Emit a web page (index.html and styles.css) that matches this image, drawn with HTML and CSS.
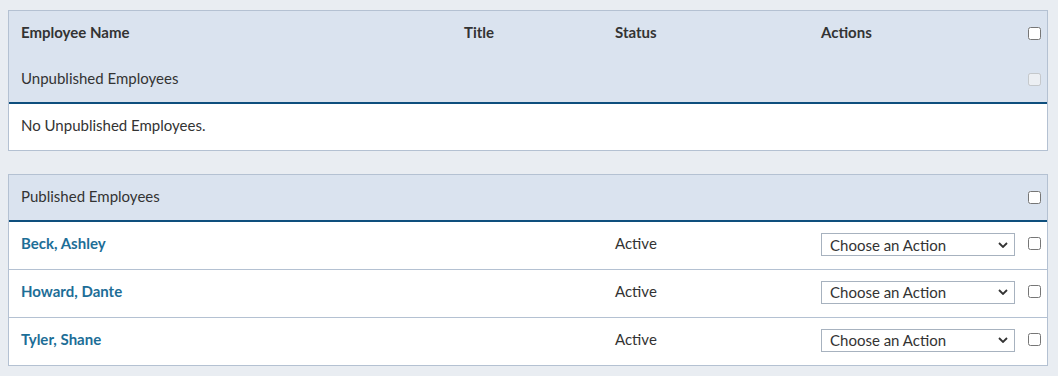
FILE: index.html
```html
<!DOCTYPE html>
<html>
<head>
    <title>Employees</title>
    <link rel="stylesheet" href="styles.css">
</head>
<body>
    <!-- Unpublished -->
    <div class="panel">
        <table class="emp-table">
            <colgroup>
                <col class="col-name">
                <col class="col-title">
                <col class="col-status">
                <col class="col-actions">
                <col class="col-check">
            </colgroup>
            <thead>
                <tr class="head-row">
                    <th>Employee Name</th>
                    <th>Title</th>
                    <th>Status</th>
                    <th>Actions</th>
                    <th class="check-cell"><input type="checkbox"></th>
                </tr>
                <tr class="group-row">
                    <td colspan="4">Unpublished Employees</td>
                    <td class="check-cell"><input type="checkbox" disabled></td>
                </tr>
            </thead>
            <tbody>
                <tr class="empty-row">
                    <td colspan="5">No Unpublished Employees.</td>
                </tr>
            </tbody>
        </table>
    </div>

    <!-- Published -->
    <div class="panel">
        <table class="emp-table">
            <colgroup>
                <col class="col-name">
                <col class="col-title">
                <col class="col-status">
                <col class="col-actions">
                <col class="col-check">
            </colgroup>
            <thead>
                <tr class="group-row">
                    <td colspan="4">Published Employees</td>
                    <td class="check-cell"><input type="checkbox"></td>
                </tr>
            </thead>
            <tbody>
                <tr class="emp-row">
                    <td><a href="#">Beck, Ashley</a></td>
                    <td></td>
                    <td>Active</td>
                    <td>
                        <select class="action-select">
                            <option>Choose an Action</option>
                        </select>
                    </td>
                    <td class="check-cell"><input type="checkbox"></td>
                </tr>
                <tr class="emp-row">
                    <td><a href="#">Howard, Dante</a></td>
                    <td></td>
                    <td>Active</td>
                    <td>
                        <select class="action-select">
                            <option>Choose an Action</option>
                        </select>
                    </td>
                    <td class="check-cell"><input type="checkbox"></td>
                </tr>
                <tr class="emp-row">
                    <td><a href="#">Tyler, Shane</a></td>
                    <td></td>
                    <td>Active</td>
                    <td>
                        <select class="action-select">
                            <option>Choose an Action</option>
                        </select>
                    </td>
                    <td class="check-cell"><input type="checkbox"></td>
                </tr>
            </tbody>
        </table>
    </div>
</body>
</html>
```

FILE: styles.css
```css
body {
    margin: 0;
    padding: 10px 10px 0 8px;
    background: #e9edf2;
    font-family: Lato, "Noto Sans", sans-serif;
    font-size: 15px;
    color: #333;
}

.panel {
    background: #fff;
    border: 1px solid #b4c1d2;
    margin-bottom: 23px;
}

.emp-table {
    width: 100%;
    border-collapse: collapse;
    table-layout: fixed;
}

.col-name { width: 443px; }
.col-title { width: 151px; }
.col-status { width: 206px; }
.col-actions { width: 207px; }
.col-check { width: 31px; }

.emp-table th,
.emp-table td {
    padding: 0 0 0 12px;
    text-align: left;
    vertical-align: middle;
}

thead {
    background: #dae3ef;
    border-bottom: 2px solid #0e4f7d;
}

.head-row {
    height: 46px;
}

.head-row th {
    font-weight: bold;
    padding-bottom: 5px;
}

.group-row {
    height: 46px;
}

.group-row td {
    padding-bottom: 4px;
}

.empty-row {
    height: 47px;
}

.empty-row td {
    padding-bottom: 4px;
}

.emp-row {
    height: 48px;
    border-bottom: 1px solid #b4c1d2;
}

.emp-row:last-child {
    border-bottom: none;
}

.emp-row td {
    vertical-align: top;
    padding-top: 12px;
}

.emp-row a {
    color: #1d6e97;
    font-weight: bold;
    text-decoration: none;
}

.check-cell input {
    margin: 0;
    width: 13px;
    height: 13px;
    vertical-align: middle;
}

.emp-row .check-cell {
    padding-top: 15px;
    line-height: 0;
}

.emp-row .check-cell input {
    vertical-align: top;
}

.action-select {
    appearance: none;
    width: 194px;
    height: 23px;
    margin-top: -1px;
    padding: 0 0 0 8px;
    border: 1px solid #a7b2bf;
    border-radius: 0;
    background: #fff url("data:image/svg+xml;utf8,<svg xmlns='http://www.w3.org/2000/svg' width='10' height='6' viewBox='0 0 10 6'><path d='M1 1l4 4 4-4' fill='none' stroke='%23333' stroke-width='1.8'/></svg>") no-repeat right 6px center;
    font-family: Lato, "Noto Sans", sans-serif;
    font-size: 15px;
    color: #333;
}
```
